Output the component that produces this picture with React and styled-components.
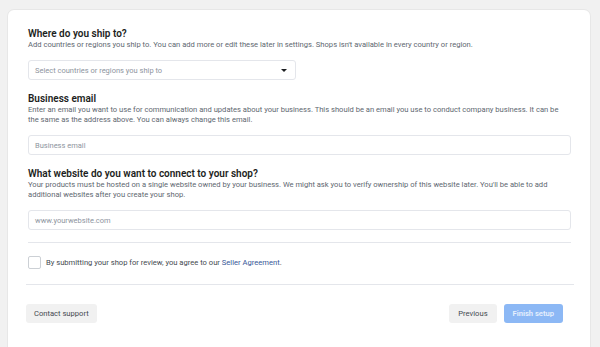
import React from "react";
import styled, { createGlobalStyle } from "styled-components";

const Global = createGlobalStyle`
  body {
    margin: 0;
    background: #f1f1f1;
    font-family: Roboto, "Liberation Sans", Arial, sans-serif;
    color: #1c1e21;
  }
`;

const Page = styled.div`
  padding: 10px 10px 0 8px;
  height: 347px;
  box-sizing: border-box;
  overflow: hidden;
`;

const Card = styled.div`
  background: #fff;
  border-radius: 6px;
  box-shadow: 0 0 0 1px rgba(0, 0, 0, 0.04);
  padding: 18px 19px 30px 20px;
  min-height: 360px;
  box-sizing: border-box;
`;

const Section = styled.div`
  display: flex;
  flex-direction: column;
  margin-bottom: ${(p) => p.$gap || 13}px;
`;

const Title = styled.div`
  font-size: 10px;
  line-height: 12px;
  font-weight: 600;
  color: #1c1e21;
`;

const Desc = styled.div`
  font-size: 7.6px;
  line-height: 10px;
  color: #606770;
  margin-bottom: 10px;
  padding-right: 8px;
`;

const Field = styled.div`
  display: flex;
  align-items: center;
  justify-content: space-between;
  height: 20px;
  width: ${(p) => p.$width || "100%"};
  box-sizing: border-box;
  border: 1px solid #e4e6eb;
  border-radius: 3px;
  padding: 0 8px 0 6px;
  font-size: 7.5px;
  color: #8d949e;
`;

const Caret = styled.span`
  width: 0;
  height: 0;
  border-left: 3.5px solid transparent;
  border-right: 3.5px solid transparent;
  border-top: 3.5px solid #1c1e21;
  margin-top: 1px;
`;

const Divider = styled.hr`
  border: 0;
  border-top: 1px solid #e4e6eb;
  margin: ${(p) => p.$m || "0"};
`;

const CheckRow = styled.label`
  display: flex;
  align-items: center;
  gap: 5px;
  margin: 13px 0 15px;
  font-size: 7.6px;
  color: #444950;
`;

const Box = styled.span`
  width: 11px;
  height: 11px;
  border: 1px solid #ccd0d5;
  border-radius: 2px;
  background: #fff;
`;

const Link = styled.span`
  color: #385898;
`;

const Footer = styled.div`
  display: flex;
  align-items: center;
  justify-content: space-between;
  margin: 19px 8px 0 -2px;
`;

const Group = styled.div`
  display: flex;
  gap: 7px;
`;

const Button = styled.button`
  height: 19px;
  padding: 0 ${(p) => p.$pad || 8}px;
  border: 0;
  border-radius: 3px;
  font-family: inherit;
  font-size: 7.6px;
  font-weight: ${(p) => (p.$primary ? 600 : 400)};
  background: ${(p) => (p.$primary ? "#8cb8f5" : "#f1f1f1")};
  color: ${(p) => (p.$primary ? "#e6f0fd" : "#444950")};
`;

export default function App() {
  return (
    <>
      <Global />
      <Page>
        <Card>
          <Section>
            <Title>Where do you ship to?</Title>
            <Desc>
              Add countries or regions you ship to. You can add more or edit these later in settings. Shops isn't
              available in every country or region.
            </Desc>
            <Field $width="268px">
              Select countries or regions you ship to
              <Caret />
            </Field>
          </Section>
          <Section>
            <Title>Business email</Title>
            <Desc>
              Enter an email you want to use for communication and updates about your business. This should be an
              email you use to conduct company business. It can be the same as the address above. You can always
              change this email.
            </Desc>
            <Field>Business email</Field>
          </Section>
          <Section $gap={12}>
            <Title>What website do you want to connect to your shop?</Title>
            <Desc>
              Your products must be hosted on a single website owned by your business. We might ask you to verify
              ownership of this website later. You'll be able to add additional websites after you create your shop.
            </Desc>
            <Field>www.yourwebsite.com</Field>
          </Section>
          <Divider />
          <CheckRow>
            <Box />
            <span>
              By submitting your shop for review, you agree to our <Link>Seller Agreement</Link>.
            </span>
          </CheckRow>
          <Divider $m="0 -3px 0 -2px" />
          <Footer>
            <Button>Contact support</Button>
            <Group>
              <Button $pad={9}>Previous</Button>
              <Button $primary $pad={9}>Finish setup</Button>
            </Group>
          </Footer>
        </Card>
      </Page>
    </>
  );
}
